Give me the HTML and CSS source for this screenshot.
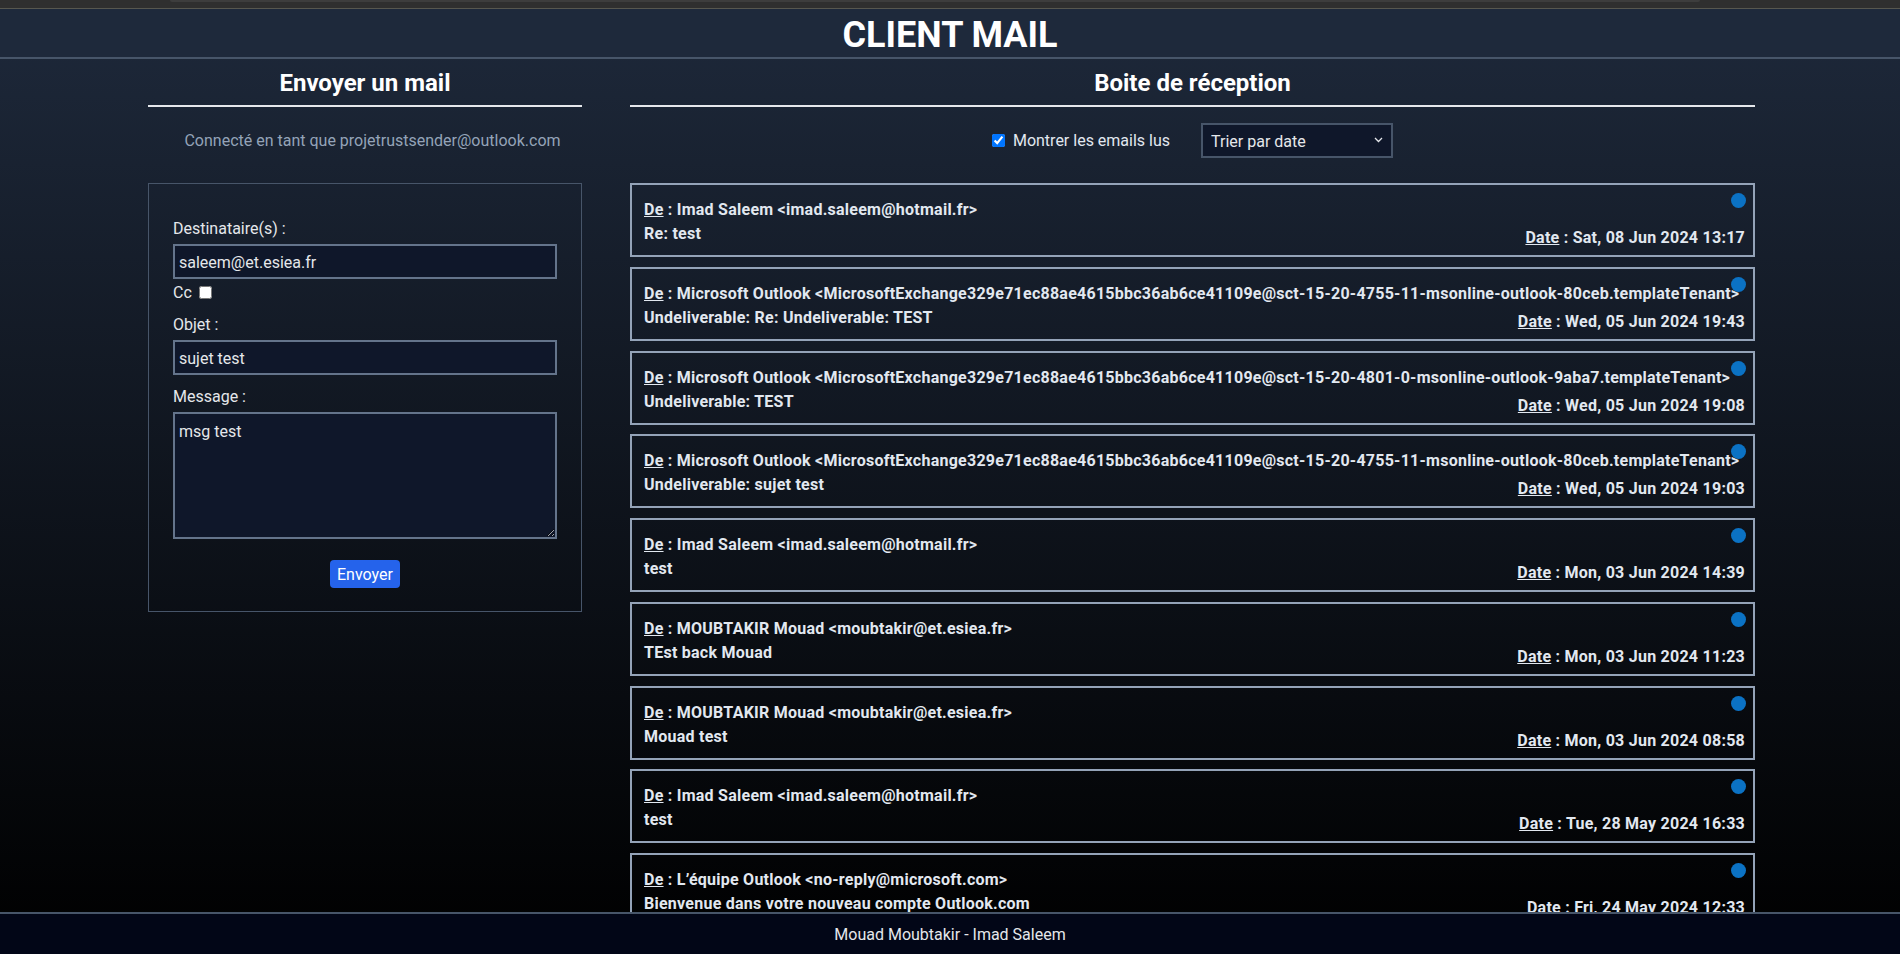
FILE: index.html
```html
<!DOCTYPE html>
<html lang="fr">
<head>
<meta charset="utf-8">
<title>Client Mail</title>
<link rel="stylesheet" href="styles.css">
</head>
<body>
<div class="chrome-strip"><div class="chrome-tab"></div></div>
<header class="site-header"><h1 class="site-title">CLIENT MAIL</h1></header>
<main class="layout">
  <section class="compose">
    <h2 class="section-title">Envoyer un mail</h2>
    <p class="account">Connecté en tant que projetrustsender@outlook.com</p>
    <form class="compose-form">
      <label class="field-label" for="to">Destinataire(s) :</label>
      <input id="to" class="field-input" type="text" value="saleem@et.esiea.fr">
      <div class="cc-row"><label for="cc">Cc</label><input id="cc" class="cc-box" type="checkbox"></div>
      <label class="field-label gap-8" for="subject">Objet :</label>
      <input id="subject" class="field-input" type="text" value="sujet test">
      <label class="field-label gap-10" for="msg">Message :</label>
      <textarea id="msg" class="field-area">msg test</textarea>
      <div class="actions"><button type="button" class="send-btn">Envoyer</button></div>
    </form>
  </section>
  <section class="inbox">
    <h2 class="section-title">Boite de réception</h2>
    <div class="inbox-controls">
      <label class="show-read"><input class="show-read-box" type="checkbox" checked>Montrer les emails lus</label>
      <div class="sort-wrap">
        <select class="sort-select"><option>Trier par date</option><option>Trier par expéditeur</option></select>
        <svg class="sort-chevron" width="9" height="6" viewBox="0 0 9 6"><polyline points="1,1 4.5,4.5 8,1" fill="none" stroke="#e5e7eb" stroke-width="1.3"/></svg>
      </div>
    </div>
    <ul class="mail-list">
      <li class="mail-card"><span class="unread-dot"></span>
        <div class="mail-from"><u>De</u> : Imad Saleem &lt;imad.saleem@hotmail.fr&gt;</div>
        <div class="mail-row"><span class="mail-subject">Re: test</span><span class="mail-date"><u>Date</u> : Sat, 08 Jun 2024 13:17</span></div>
      </li>
      <li class="mail-card"><span class="unread-dot"></span>
        <div class="mail-from"><u>De</u> : Microsoft Outlook &lt;MicrosoftExchange329e71ec88ae4615bbc36ab6ce41109e@sct-15-20-4755-11-msonline-outlook-80ceb.templateTenant&gt;</div>
        <div class="mail-row"><span class="mail-subject">Undeliverable: Re: Undeliverable: TEST</span><span class="mail-date"><u>Date</u> : Wed, 05 Jun 2024 19:43</span></div>
      </li>
      <li class="mail-card"><span class="unread-dot"></span>
        <div class="mail-from"><u>De</u> : Microsoft Outlook &lt;MicrosoftExchange329e71ec88ae4615bbc36ab6ce41109e@sct-15-20-4801-0-msonline-outlook-9aba7.templateTenant&gt;</div>
        <div class="mail-row"><span class="mail-subject">Undeliverable: TEST</span><span class="mail-date"><u>Date</u> : Wed, 05 Jun 2024 19:08</span></div>
      </li>
      <li class="mail-card"><span class="unread-dot"></span>
        <div class="mail-from"><u>De</u> : Microsoft Outlook &lt;MicrosoftExchange329e71ec88ae4615bbc36ab6ce41109e@sct-15-20-4755-11-msonline-outlook-80ceb.templateTenant&gt;</div>
        <div class="mail-row"><span class="mail-subject">Undeliverable: sujet test</span><span class="mail-date"><u>Date</u> : Wed, 05 Jun 2024 19:03</span></div>
      </li>
      <li class="mail-card"><span class="unread-dot"></span>
        <div class="mail-from"><u>De</u> : Imad Saleem &lt;imad.saleem@hotmail.fr&gt;</div>
        <div class="mail-row"><span class="mail-subject">test</span><span class="mail-date"><u>Date</u> : Mon, 03 Jun 2024 14:39</span></div>
      </li>
      <li class="mail-card"><span class="unread-dot"></span>
        <div class="mail-from"><u>De</u> : MOUBTAKIR Mouad &lt;moubtakir@et.esiea.fr&gt;</div>
        <div class="mail-row"><span class="mail-subject">TEst back Mouad</span><span class="mail-date"><u>Date</u> : Mon, 03 Jun 2024 11:23</span></div>
      </li>
      <li class="mail-card"><span class="unread-dot"></span>
        <div class="mail-from"><u>De</u> : MOUBTAKIR Mouad &lt;moubtakir@et.esiea.fr&gt;</div>
        <div class="mail-row"><span class="mail-subject">Mouad test</span><span class="mail-date"><u>Date</u> : Mon, 03 Jun 2024 08:58</span></div>
      </li>
      <li class="mail-card"><span class="unread-dot"></span>
        <div class="mail-from"><u>De</u> : Imad Saleem &lt;imad.saleem@hotmail.fr&gt;</div>
        <div class="mail-row"><span class="mail-subject">test</span><span class="mail-date"><u>Date</u> : Tue, 28 May 2024 16:33</span></div>
      </li>
      <li class="mail-card"><span class="unread-dot"></span>
        <div class="mail-from"><u>De</u> : L’équipe Outlook &lt;no-reply@microsoft.com&gt;</div>
        <div class="mail-row"><span class="mail-subject">Bienvenue dans votre nouveau compte Outlook.com</span><span class="mail-date"><u>Date</u> : Fri, 24 May 2024 12:33</span></div>
      </li>
    </ul>
  </section>
</main>
<footer class="site-footer">Mouad Moubtakir - Imad Saleem</footer>
</body>
</html>
```

FILE: styles.css
```css
* { box-sizing: border-box; }
html, body { margin: 0; height: 100%; }
body {
  font-family: Roboto, "Open Sans", sans-serif;
  font-size: 16px;
  line-height: 24px;
  color: #e2e8f0;
  background: linear-gradient(#1e293b, #000000);
  overflow: hidden;
}
.chrome-strip {
  height: 9px;
  background: #2f2f2f;
  border-bottom: 1px solid #57574f;
  padding: 0 200px 0 170px;
}
.chrome-tab { height: 2px; background: #3d3d3d; border-radius: 0 0 3px 3px; }
.site-header {
  height: 50px;
  background: #1e293b;
  border-bottom: 2px solid #475569;
}
.site-title {
  margin: 0;
  padding-top: 4px;
  font-size: 36px;
  line-height: 44px;
  font-weight: 700;
  text-align: center;
  color: #ffffff;
}
.layout {
  display: grid;
  grid-template-columns: 434px 1125px;
  column-gap: 48px;
  margin-left: 148px;
  padding-top: 8px;
}
.section-title {
  margin: 0;
  padding-top: 1px;
  font-size: 24px;
  line-height: 31px;
  font-weight: 700;
  text-align: center;
  color: #ffffff;
  padding-bottom: 6px;
  border-bottom: 2px solid #e5e7eb;
}
.account {
  margin: 22px 0 0;
  padding-left: 15px;
  text-align: center;
  color: #94a3b8;
}
.compose-form {
  margin-top: 30px;
  border: 1px solid #475569;
  padding: 33px 24px 23px 24px;
}
.field-label { display: block; color: #e5e7eb; }
.gap-8 { margin-top: 8px; }
.gap-10 { margin-top: 10px; }
.field-input, .field-area {
  display: block;
  width: 100%;
  margin: 3px 0 0;
  border: 2px solid #64748b;
  background: #0f172a;
  color: #e5e7eb;
  font-family: inherit;
  font-size: 16px;
  outline: none;
}
.field-input { height: 35px; padding: 1px 4px 0; }
.field-area { height: 127px; padding: 6px 4px 4px; line-height: 24px; resize: both; }
.cc-row { margin-top: 2px; display: flex; align-items: center; color: #e5e7eb; }
.cc-box { margin: 0 0 2px 7px; width: 13px; height: 13px; }
.actions { margin-top: 21px; display: flex; justify-content: center; }
.send-btn {
  height: 28px;
  padding: 1px 7px 0;
  border: none;
  border-radius: 4px;
  background: #2563eb;
  color: #ffffff;
  font-family: inherit;
  font-size: 16px;
  line-height: 27px;
}
.inbox-controls {
  margin-top: 16px;
  display: flex;
  justify-content: center;
  align-items: center;
  gap: 31px;
}
.show-read { display: flex; align-items: center; color: #e2e8f0; padding-top: 1px; }
.show-read-box { margin: 0 8px 1px 0; width: 13px; height: 13px; }
.sort-wrap { position: relative; }
.sort-select {
  appearance: none;
  -webkit-appearance: none;
  width: 192px;
  height: 35px;
  border: 2px solid #475569;
  border-radius: 0;
  background: #0f172a;
  color: #e5e7eb;
  font-family: inherit;
  font-size: 16px;
  padding: 1px 20px 0 8px;
  outline: none;
}
.sort-chevron { position: absolute; right: 10px; top: 14px; pointer-events: none; }
.mail-list {
  list-style: none;
  margin: 25px 0 0;
  padding: 0;
  display: flex;
  flex-direction: column;
  gap: 9.75px;
}
.mail-card {
  position: relative;
  height: 74px;
  border: 2px solid #94a3b8;
  padding: 13px 8px 5px 12px;
  font-weight: 700;
  letter-spacing: 0.25px;
  color: #e2e8f0;
}
.mail-from { white-space: nowrap; }
.mail-row { display: flex; justify-content: space-between; align-items: flex-end; }
.mail-subject { margin-bottom: 4px; }
.mail-date { white-space: nowrap; }
.unread-dot {
  position: absolute;
  top: 8px;
  right: 7px;
  width: 15px;
  height: 15px;
  border-radius: 50%;
  background: #0b72c4;
}
.site-footer {
  position: fixed;
  left: 0;
  right: 0;
  bottom: 0;
  height: 42px;
  border-top: 2px solid #475569;
  background: #020617;
  color: #e5e7eb;
  text-align: center;
  line-height: 40px;
  padding-top: 1px;
}
```
